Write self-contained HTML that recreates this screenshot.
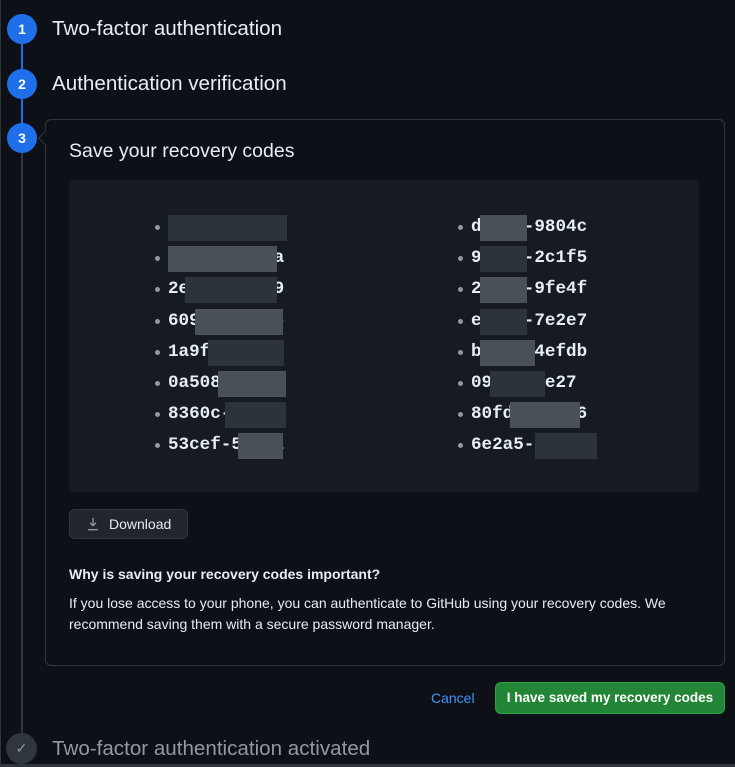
<!DOCTYPE html>
<html><head><meta charset="utf-8"><style>
*{margin:0;padding:0;box-sizing:border-box}
body{width:735px;height:767px;background:#0d1117;font-family:"Liberation Sans",sans-serif;color:#e6edf3;position:relative;overflow:hidden}
.abs{position:absolute}
.circ{position:absolute;left:7px;width:30px;height:30px;border-radius:50%;background:#1f6feb;color:#fff;font-weight:bold;font-size:14px;text-align:center;line-height:30px}
.h{position:absolute;left:52px;font-size:20.6px;color:#e6edf3}
.code{position:absolute;font-family:"Liberation Mono",monospace;font-weight:bold;font-size:17.6px;color:#e6edf3;line-height:20px;white-space:pre}
.dot{position:absolute;width:5px;height:5px;border-radius:50%;background:#9198a1}
.blk{position:absolute;background:#3d434b}
</style></head><body>
<div class="abs" style="left:0;top:0;width:1px;height:767px;background:#30363d"></div>
<div class="abs" style="left:21px;top:40px;width:2px;height:700px;background:#30363d"></div>
<div class="abs" style="left:21px;top:40px;width:2px;height:85px;background:#1f6feb"></div>
<div class="circ" style="top:14px">1</div>
<div class="h" style="top:17px">Two-factor authentication</div>
<div class="circ" style="top:69px">2</div>
<div class="h" style="top:72px">Authentication verification</div>
<div class="circ" style="top:123px">3</div>
<div class="abs" style="left:45px;top:119px;width:680px;height:547px;border:1px solid #30363d;border-radius:6px;background:#0d1117"></div>
<div class="abs" style="left:40px;top:133px;width:10px;height:10px;background:#0d1117;border-left:1px solid #30363d;border-bottom:1px solid #30363d;transform:rotate(45deg)"></div>
<div class="abs" style="left:69px;top:140px;font-size:19.5px">Save your recovery codes</div>
<div class="abs" style="left:69px;top:180px;width:630px;height:312px;background:#161b22"></div>
<div id="codes"></div>
<div class="abs" style="left:69px;top:509px;width:119px;height:30px;border:1px solid #30363d;border-radius:6px;background:#21262d;font-size:14px;line-height:28px;padding-left:39px">Download</div>
<svg class="abs" style="left:86px;top:517px" width="14" height="14" viewBox="0 0 16 16"><path d="M8 1v9M4.5 6.5 8 10l3.5-3.5M2.5 14.5h11" stroke="#9198a1" stroke-width="1.5" fill="none"/></svg>
<div class="abs" style="left:69px;top:566px;font-size:14px;font-weight:bold">Why is saving your recovery codes important?</div>
<div class="abs" style="left:69px;top:593px;font-size:14px;line-height:21px;width:630px">If you lose access to your phone, you can authenticate to GitHub using your recovery codes. We recommend saving them with a secure password manager.</div>
<div class="abs" style="left:431px;top:690px;font-size:14px;color:#4493f8">Cancel</div>
<div class="abs" style="left:495px;top:682px;width:230px;height:32px;border-radius:6px;background:#238636;border:1px solid #2ea043;font-size:13.5px;font-weight:bold;color:#fff;text-align:center;line-height:30px">I have saved my recovery codes</div>
<div class="abs" style="left:6px;top:733px;width:31px;height:31px;border-radius:50%;background:#30363d;color:#9198a1;text-align:center;line-height:31px;font-size:14px">✓</div>
<div class="h" style="top:737px;color:#9198a1">Two-factor authentication activated</div>
<div class="abs" style="left:0;top:764px;width:735px;height:3px;background:#30363d"></div>
<script>
var L=["xxxxx-xxxxx","9xxxx-xxxxa","2exxx-xxxx9","609xx-xxxx6","1a9fx-xxxxf","0a508-xxxx7","8360c-xxxx0","53cef-5xx11"];
var R=["dxxxx-9804c","9xxxx-2c1f5","2xxxx-9fe4f","exxxx-7e2e7","bxxxx-4efdb","09xxx-fe27x","80fdx-xxxe6","6e2a5-xxxxx"];
var LB=[[168,287],[168,277],[185,277],[195,283],[208,284],[218,286],[225,286],[238,283]];
var RB=[[480,527],[480,527],[480,527],[480,527],[480,535],[490,545],[510,580],[535,597]];
var h="";
for(var i=0;i<8;i++){var y=217+i*31.2;
h+='<div class="dot" style="left:155px;top:'+(y+8)+'px"></div><div class="code" style="left:168px;top:'+y+'px">'+L[i].replace(/x/g,' ')+'</div>';
h+='<div class="dot" style="left:458px;top:'+(y+8)+'px"></div><div class="code" style="left:471px;top:'+y+'px">'+R[i].replace(/x/g,' ')+'</div>';
h+='<div class="blk" style="left:'+LB[i][0]+'px;top:'+(y-2)+'px;width:'+(LB[i][1]-LB[i][0])+'px;height:26px;background:'+(i%2?'#4a5058':'#2d333b')+'"></div>';
h+='<div class="blk" style="left:'+RB[i][0]+'px;top:'+(y-2)+'px;width:'+(RB[i][1]-RB[i][0])+'px;height:26px;background:'+(i%2?'#2d333b':'#4a5058')+'"></div>';}
document.getElementById("codes").innerHTML=h;
</script>
</body></html>
